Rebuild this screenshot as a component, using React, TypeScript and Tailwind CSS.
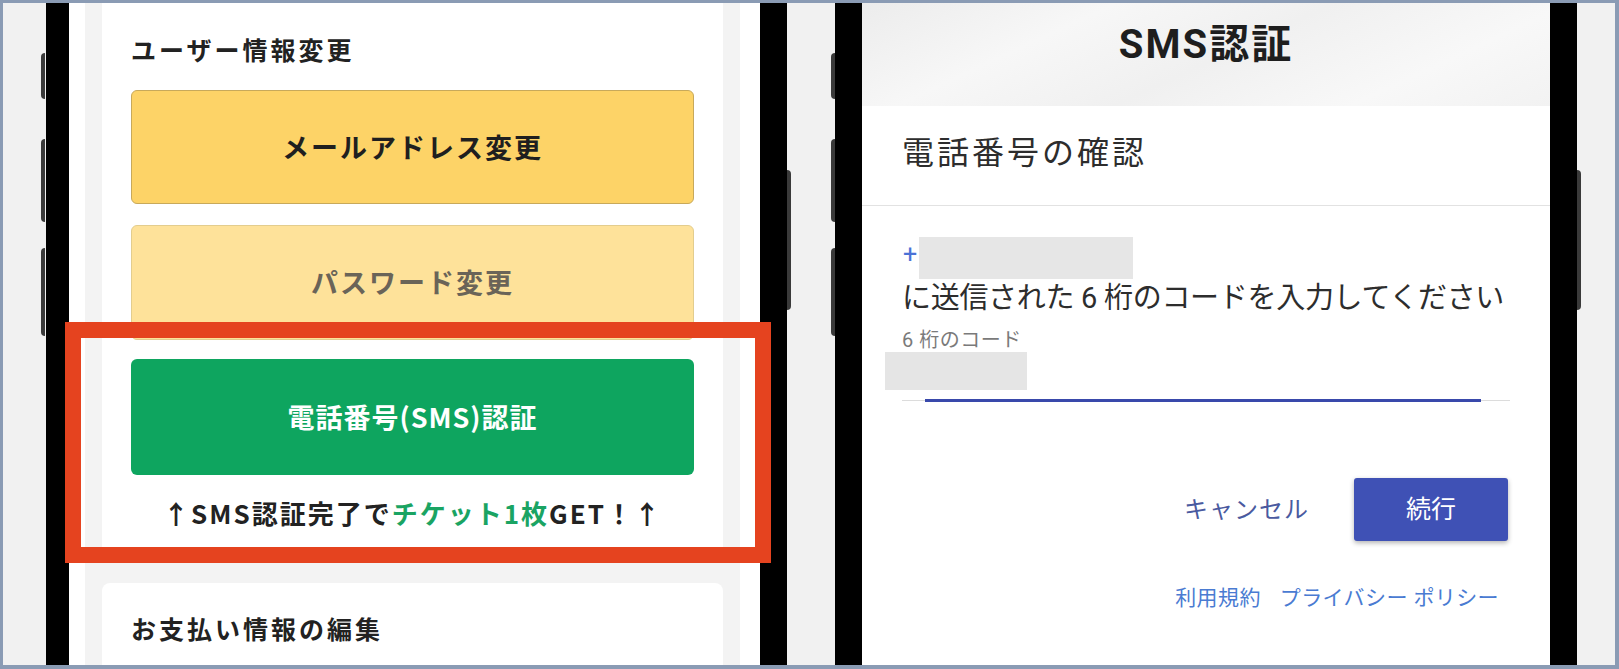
import React from "react";

const jp = "font-[family-name:'Noto_Sans_CJK_JP','Noto_Sans',sans-serif]";
const ui = "font-[family-name:Roboto,'Noto_Sans_CJK_JP',sans-serif]";

function SideKeys() {
    return (
        <div className="flex w-[4px] shrink-0 flex-col">
            <div className="mt-[50px] h-[46px] rounded-l-sm bg-[#3a3a3a]"/>
            <div className="mt-[40px] h-[83px] rounded-l-sm bg-[#3a3a3a]"/>
            <div className="mt-[26px] h-[88px] rounded-l-sm bg-[#3a3a3a]"/>
        </div>
    );
}

function PowerKey() {
    return (
        <div className="flex w-[4px] shrink-0 flex-col">
            <div className="mt-[167px] h-[140px] rounded-r-sm bg-[#3a3a3a]"/>
        </div>
    );
}

function AccountScreen() {
    return (
        <div className={`flex h-full w-[691px] shrink-0 bg-white pl-[16px] pr-[20px] ${jp}`}>
            <div className="flex flex-1 flex-col gap-[20px] bg-[#f3f3f3] px-[17px]">
                <div className="flex flex-col rounded-b-lg bg-white px-[29px] pt-[31px] pb-[33px]">
                    <h2 className="text-[25px] leading-[30px] font-bold tracking-[3px] text-[#222]">ユーザー情報変更</h2>
                    <button className="mt-[26px] h-[114px] rounded-md border border-[#c8a95a] bg-[#fdd367] text-[27px] font-bold tracking-[2px] text-[#1f1f1f]">
                        メールアドレス変更
                    </button>
                    <button className="mt-[21px] h-[115px] rounded-md border border-[#e3cd8e] bg-[#fee29a] text-[27px] font-bold tracking-[2px] text-[#6a6458]">
                        パスワード変更
                    </button>
                    <button className="mt-[19px] h-[116px] rounded-md bg-[#0ea55f] text-[27px] font-bold tracking-[1px] text-white">
                        電話番号(SMS)認証
                    </button>
                    <p className="mt-[21px] text-center text-[26px] leading-[34px] font-bold tracking-[2px] text-[#222]">
                        ↑SMS認証完了で<span className="text-[#1aa463]">チケット1枚</span>GET！↑
                    </p>
                </div>
                <div className="flex-1 rounded-t-lg bg-white px-[29px] pt-[30px]">
                    <h2 className="text-[25px] leading-[30px] font-bold tracking-[3px] text-[#222]">お支払い情報の編集</h2>
                </div>
            </div>
        </div>
    );
}

function SmsScreen() {
    return (
        <div className={`flex h-full w-[688px] shrink-0 flex-col bg-white ${ui}`}>
            <div className="flex h-[103px] shrink-0 justify-center bg-[linear-gradient(155deg,#ececec_0%,#f7f7f7_28%,#f0f0f0_52%,#f8f8f8_78%,#f2f2f2_100%)] pt-[16px]">
                <h1 className="text-[40px] leading-[52px] font-bold tracking-[2px] text-[#1e1e1e]">SMS認証</h1>
            </div>
            <div className="flex flex-col pl-[40px]">
                <h3 className="mt-[27px] text-[32px] leading-[40px] tracking-[3px] text-[#2d2d2d]">電話番号の確認</h3>
            </div>
            <div className="mt-[32px] h-px bg-[#e2e2e2]"/>
            <div className="flex flex-col pl-[40px]">
                <div className="mt-[31px] flex items-center">
                    <span className="mb-[8px] ml-[1px] text-[25px] leading-none text-[#4a72d6]">+</span>
                    <div className="ml-[2px] h-[42px] w-[214px] bg-[#e6e6e6]"/>
                </div>
                <p className="mt-[2px] text-[29px] leading-[34px] tracking-[-0.3px] text-[#2d2d2d]">
                    に送信された 6 桁のコードを入力してください
                </p>
                <p className="mt-[13px] text-[20px] leading-[24px] tracking-[0.5px] text-[#7a7a7a]">6 桁のコード</p>
                <div className="ml-[-17px] h-[38px] w-[142px] bg-[#e5e5e5]"/>
                <div className="mt-[10px] flex h-px w-[608px] items-center bg-[#dcdcdc] pl-[23px]">
                    <div className="h-[3px] w-[556px] bg-[#3949ab]"/>
                </div>
            </div>
            <div className="mt-[77px] flex items-center justify-end gap-[45px] pr-[42px]">
                <span className="text-[24px] tracking-[1px] text-[#4a5aa0]">キャンセル</span>
                <button className="h-[63px] w-[154px] rounded-[3px] bg-[#3f51b5] text-[25px] text-white shadow-[0_2px_5px_rgba(0,0,0,0.3)]">
                    続行
                </button>
            </div>
            <div className="mt-[43px] flex justify-end gap-[19px] pr-[51px] text-[21px] leading-[28px] tracking-[0.4px] text-[#4a7bd2]">
                <span>利用規約</span>
                <span>プライバシー ポリシー</span>
            </div>
        </div>
    );
}

export default function App() {
    return (
        <div className="relative flex h-[669px] w-[1619px] overflow-hidden border-t-[3px] border-r-4 border-b-4 border-l-[3px] border-[#8a9bb4] bg-[#f1f1f1]">
            <div className="w-[38px] shrink-0"/>
            <SideKeys/>
            <div className="ml-px flex h-full shrink-0 border-r-[27px] border-l-[23px] border-black">
                <AccountScreen/>
            </div>
            <PowerKey/>
            <div className="w-[40px] shrink-0"/>
            <SideKeys/>
            <div className="flex h-full shrink-0 border-x-[27px] border-black">
                <SmsScreen/>
            </div>
            <PowerKey/>
            <div className="flex-1"/>

            {/* highlight frame drawn over the left phone */}
            <div className="pointer-events-none absolute top-[319px] left-[62px] h-[241px] w-[706px] border-[16px] border-[#e5431f]"/>
        </div>
    );
}
